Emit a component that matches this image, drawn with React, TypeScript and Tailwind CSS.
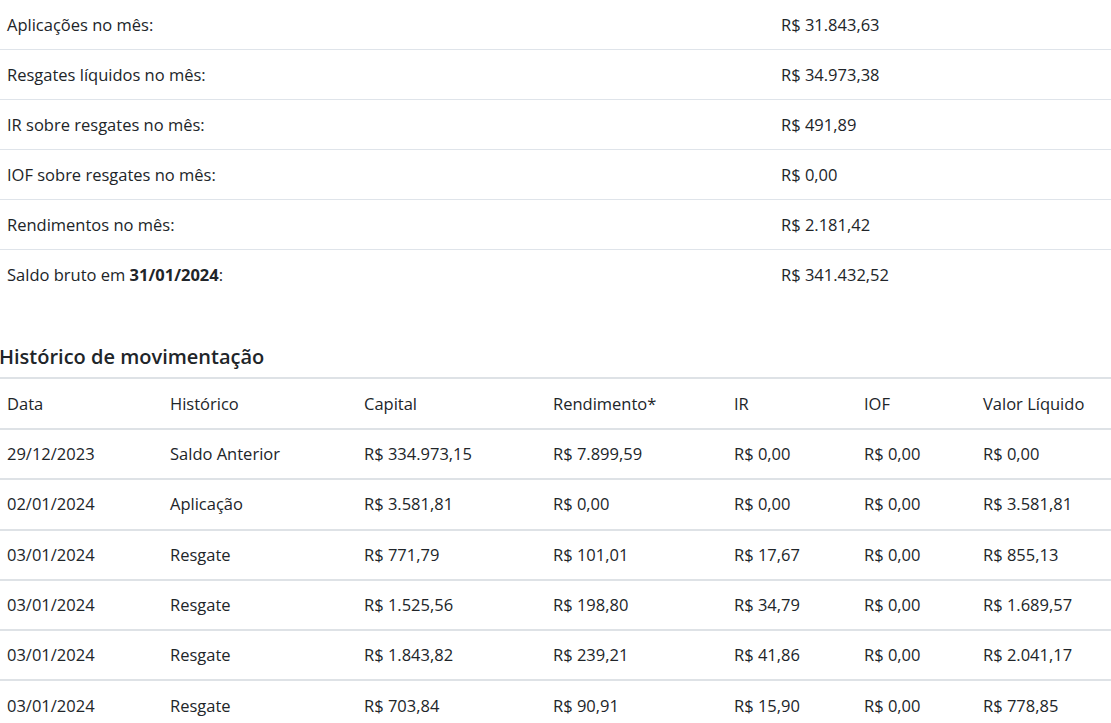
const summary: { label: React.ReactNode; value: string }[] = [
  { label: 'Aplicações no mês:', value: 'R$ 31.843,63' },
  { label: 'Resgates líquidos no mês:', value: 'R$ 34.973,38' },
  { label: 'IR sobre resgates no mês:', value: 'R$ 491,89' },
  { label: 'IOF sobre resgates no mês:', value: 'R$ 0,00' },
  { label: 'Rendimentos no mês:', value: 'R$ 2.181,42' },
  {
    label: (
      <>
        Saldo bruto em <b className="font-bold">31/01/2024</b>:
      </>
    ),
    value: 'R$ 341.432,52',
  },
];

const headers = ['Data', 'Histórico', 'Capital', 'Rendimento*', 'IR', 'IOF', 'Valor Líquido'];

const movements: string[][] = [
  ['29/12/2023', 'Saldo Anterior', 'R$ 334.973,15', 'R$ 7.899,59', 'R$ 0,00', 'R$ 0,00', 'R$ 0,00'],
  ['02/01/2024', 'Aplicação', 'R$ 3.581,81', 'R$ 0,00', 'R$ 0,00', 'R$ 0,00', 'R$ 3.581,81'],
  ['03/01/2024', 'Resgate', 'R$ 771,79', 'R$ 101,01', 'R$ 17,67', 'R$ 0,00', 'R$ 855,13'],
  ['03/01/2024', 'Resgate', 'R$ 1.525,56', 'R$ 198,80', 'R$ 34,79', 'R$ 0,00', 'R$ 1.689,57'],
  ['03/01/2024', 'Resgate', 'R$ 1.843,82', 'R$ 239,21', 'R$ 41,86', 'R$ 0,00', 'R$ 2.041,17'],
  ['03/01/2024', 'Resgate', 'R$ 703,84', 'R$ 90,91', 'R$ 15,90', 'R$ 0,00', 'R$ 778,85'],
];

const cols = 'grid grid-cols-[163px_194px_189px_181px_130px_119px_1fr]';

/* ---- Sections ---- */

function SummaryTable() {
  return (
    <div>
      {summary.map((row, i) => (
        <div
          key={i}
          className={`grid h-[50px] grid-cols-[774px_1fr] items-center ${
            i < summary.length - 1 ? 'border-b border-[#dfe4ea]' : ''
          }`}
        >
          <div className="pl-[7px]">{row.label}</div>
          <div className="pl-[7px]">{row.value}</div>
        </div>
      ))}
    </div>
  );
}

function MovementTable() {
  return (
    <div className="border-t-2 border-[#dee2e6]">
      <div className={`${cols} h-[51px] items-center border-b-2 border-[#dee2e6]`}>
        {headers.map((h) => (
          <div key={h} className="pl-[7px]">
            {h}
          </div>
        ))}
      </div>
      {movements.map((row, i) => (
        <div key={i} className={`${cols} h-[50.3px] items-center border-b-2 border-[#dee2e6]`}>
          {row.map((cell, j) => (
            <div key={j} className="pl-[7px] whitespace-nowrap">
              {cell}
            </div>
          ))}
        </div>
      ))}
    </div>
  );
}

/* ---- Page ---- */

export default function App() {
  return (
    <div className="h-[723px] w-[1111px] overflow-hidden bg-white font-['Open_Sans',sans-serif] text-[16.5px] leading-6 text-[#212529]">
      <SummaryTable />
      <h4 className="mt-[45px] mb-[8px] -ml-[1px] text-[20px] font-semibold leading-6">
        Histórico de movimentação
      </h4>
      <MovementTable />
    </div>
  );
}
